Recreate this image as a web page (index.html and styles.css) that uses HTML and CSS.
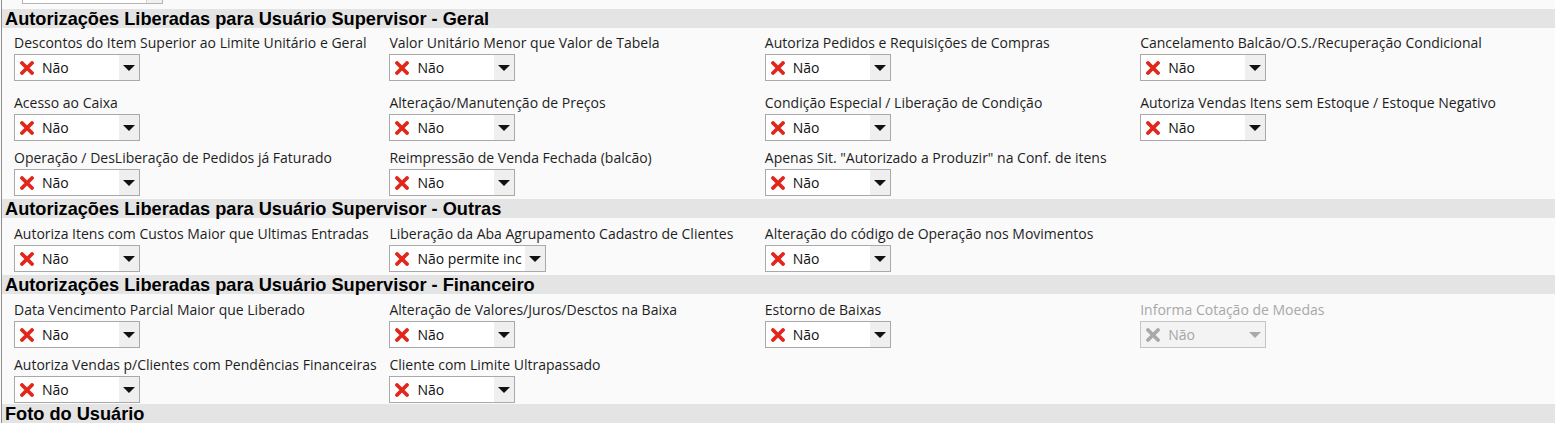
FILE: index.html
```html
<!DOCTYPE html>
<html lang="pt-BR">
<head>
<meta charset="utf-8">
<title>Autorizações</title>
<link rel="stylesheet" href="styles.css">
</head>
<body>
<div class="frame">
  <div class="combo-stub"><span class="stub-btn"></span></div>

  <div class="section-title t1">Autorizações Liberadas para Usuário Supervisor - Geral</div>
  <div class="grid r1">
    <div class="field"><div class="lbl">Descontos do Item Superior ao Limite Unitário e Geral</div><div class="combo"><span class="val"><svg class="x" viewBox="0 0 14 14"><path d="M2 2 L12 12 M12 2 L2 12"/></svg>Não</span><span class="arrow"></span></div></div>
    <div class="field"><div class="lbl">Valor Unitário Menor que Valor de Tabela</div><div class="combo"><span class="val"><svg class="x" viewBox="0 0 14 14"><path d="M2 2 L12 12 M12 2 L2 12"/></svg>Não</span><span class="arrow"></span></div></div>
    <div class="field"><div class="lbl">Autoriza Pedidos e Requisições de Compras</div><div class="combo"><span class="val"><svg class="x" viewBox="0 0 14 14"><path d="M2 2 L12 12 M12 2 L2 12"/></svg>Não</span><span class="arrow"></span></div></div>
    <div class="field"><div class="lbl">Cancelamento Balcão/O.S./Recuperação Condicional</div><div class="combo"><span class="val"><svg class="x" viewBox="0 0 14 14"><path d="M2 2 L12 12 M12 2 L2 12"/></svg>Não</span><span class="arrow"></span></div></div>
  </div>
  <div class="grid r2">
    <div class="field"><div class="lbl">Acesso ao Caixa</div><div class="combo"><span class="val"><svg class="x" viewBox="0 0 14 14"><path d="M2 2 L12 12 M12 2 L2 12"/></svg>Não</span><span class="arrow"></span></div></div>
    <div class="field"><div class="lbl">Alteração/Manutenção de Preços</div><div class="combo"><span class="val"><svg class="x" viewBox="0 0 14 14"><path d="M2 2 L12 12 M12 2 L2 12"/></svg>Não</span><span class="arrow"></span></div></div>
    <div class="field"><div class="lbl">Condição Especial / Liberação de Condição</div><div class="combo"><span class="val"><svg class="x" viewBox="0 0 14 14"><path d="M2 2 L12 12 M12 2 L2 12"/></svg>Não</span><span class="arrow"></span></div></div>
    <div class="field"><div class="lbl">Autoriza Vendas Itens sem Estoque / Estoque Negativo</div><div class="combo"><span class="val"><svg class="x" viewBox="0 0 14 14"><path d="M2 2 L12 12 M12 2 L2 12"/></svg>Não</span><span class="arrow"></span></div></div>
  </div>
  <div class="grid r3">
    <div class="field"><div class="lbl">Operação / DesLiberação de Pedidos já Faturado</div><div class="combo"><span class="val"><svg class="x" viewBox="0 0 14 14"><path d="M2 2 L12 12 M12 2 L2 12"/></svg>Não</span><span class="arrow"></span></div></div>
    <div class="field"><div class="lbl">Reimpressão de Venda Fechada (balcão)</div><div class="combo"><span class="val"><svg class="x" viewBox="0 0 14 14"><path d="M2 2 L12 12 M12 2 L2 12"/></svg>Não</span><span class="arrow"></span></div></div>
    <div class="field"><div class="lbl">Apenas Sit. "Autorizado a Produzir" na Conf. de itens</div><div class="combo"><span class="val"><svg class="x" viewBox="0 0 14 14"><path d="M2 2 L12 12 M12 2 L2 12"/></svg>Não</span><span class="arrow"></span></div></div>
  </div>

  <div class="section-title t2">Autorizações Liberadas para Usuário Supervisor - Outras</div>
  <div class="grid r4">
    <div class="field"><div class="lbl">Autoriza Itens com Custos Maior que Ultimas Entradas</div><div class="combo"><span class="val"><svg class="x" viewBox="0 0 14 14"><path d="M2 2 L12 12 M12 2 L2 12"/></svg>Não</span><span class="arrow"></span></div></div>
    <div class="field"><div class="lbl">Liberação da Aba Agrupamento Cadastro de Clientes</div><div class="combo wide"><span class="val"><svg class="x" viewBox="0 0 14 14"><path d="M2 2 L12 12 M12 2 L2 12"/></svg>Não permite inc</span><span class="arrow"></span></div></div>
    <div class="field"><div class="lbl">Alteração do código de Operação nos Movimentos</div><div class="combo"><span class="val"><svg class="x" viewBox="0 0 14 14"><path d="M2 2 L12 12 M12 2 L2 12"/></svg>Não</span><span class="arrow"></span></div></div>
  </div>

  <div class="section-title t3">Autorizações Liberadas para Usuário Supervisor - Financeiro</div>
  <div class="grid r5">
    <div class="field"><div class="lbl">Data Vencimento Parcial Maior que Liberado</div><div class="combo"><span class="val"><svg class="x" viewBox="0 0 14 14"><path d="M2 2 L12 12 M12 2 L2 12"/></svg>Não</span><span class="arrow"></span></div></div>
    <div class="field"><div class="lbl">Alteração de Valores/Juros/Desctos na Baixa</div><div class="combo"><span class="val"><svg class="x" viewBox="0 0 14 14"><path d="M2 2 L12 12 M12 2 L2 12"/></svg>Não</span><span class="arrow"></span></div></div>
    <div class="field"><div class="lbl">Estorno de Baixas</div><div class="combo"><span class="val"><svg class="x" viewBox="0 0 14 14"><path d="M2 2 L12 12 M12 2 L2 12"/></svg>Não</span><span class="arrow"></span></div></div>
    <div class="field disabled"><div class="lbl">Informa Cotação de Moedas</div><div class="combo"><span class="val"><svg class="x" viewBox="0 0 14 14"><path d="M2 2 L12 12 M12 2 L2 12"/></svg>Não</span><span class="arrow"></span></div></div>
  </div>
  <div class="grid r6">
    <div class="field"><div class="lbl">Autoriza Vendas p/Clientes com Pendências Financeiras</div><div class="combo"><span class="val"><svg class="x" viewBox="0 0 14 14"><path d="M2 2 L12 12 M12 2 L2 12"/></svg>Não</span><span class="arrow"></span></div></div>
    <div class="field"><div class="lbl">Cliente com Limite Ultrapassado</div><div class="combo"><span class="val"><svg class="x" viewBox="0 0 14 14"><path d="M2 2 L12 12 M12 2 L2 12"/></svg>Não</span><span class="arrow"></span></div></div>
  </div>

  <div class="section-title t4">Foto do Usuário</div>
</div>
</body>
</html>
```

FILE: styles.css
```css
html, body {
  margin: 0;
  padding: 0;
  background: #fafafa;
  overflow: hidden;
}
.frame {
  height: 423px;
  margin-left: 1px;
  border-left: 1px solid #8e8e8e;
  overflow: hidden;
  font-family: "Open Sans", "Noto Sans", sans-serif;
  color: #1e1e1e;
}
.combo-stub {
  position: relative;
  width: 139px;
  height: 3px;
  margin-left: 20px;
  border: 1px solid #b4b4b4;
  border-top: none;
  background: #fff;
}
.stub-btn {
  position: absolute;
  right: 0;
  top: 0;
  width: 15px;
  height: 3px;
  border-left: 1px solid #d4d4d4;
  background: #f0f0f0;
}
.section-title {
  height: 19px;
  line-height: 20px;
  padding-left: 3px;
  background: #e4e4e4;
  font-family: "Liberation Sans", Arial, sans-serif;
  font-weight: bold;
  font-size: 18.2px;
  color: #000;
  white-space: nowrap;
}
.t1 { margin-top: 5px; }
.t2 { margin-top: 3px; }
.t3 { margin-top: 3px; }
.t4 { margin-top: 1px; height: 30px; }

.grid {
  display: grid;
  grid-template-columns: repeat(4, 375.4px);
  padding-left: 12px;
}
.r1 { margin-top: 7px; }
.r2 { margin-top: 14px; }
.r3 { margin-top: 9px; }
.r4 { margin-top: 8px; }
.r5 { margin-top: 8px; }
.r6 { margin-top: 9px; }

.lbl {
  font-size: 14px;
  line-height: 16px;
  height: 16px;
  white-space: nowrap;
  margin-bottom: 3px;
  color: #1e1e1e;
}
.combo {
  display: flex;
  width: 124px;
  height: 25px;
  border: 1px solid #a9a9a9;
  background: #fff;
}
.combo.wide {
  width: 155px;
}
.val {
  flex: 1;
  display: flex;
  align-items: center;
  padding-left: 5px;
  font-size: 14px;
  color: #111;
  overflow: hidden;
  white-space: nowrap;
}
.x {
  width: 14px;
  height: 14px;
  margin-right: 8px;
  flex: none;
}
.x path {
  stroke: #e2261a;
  stroke-width: 3.8;
  stroke-linecap: round;
  fill: none;
}
.arrow {
  width: 20px;
  background: #efefef;
  position: relative;
}
.arrow::after {
  content: "";
  position: absolute;
  left: 4px;
  top: 10px;
  border-left: 6px solid transparent;
  border-right: 6px solid transparent;
  border-top: 6px solid #111;
}
.disabled .lbl { color: #a8a8a8; }
.disabled .combo {
  border-color: #c4c4c4;
  background: #f3f3f3;
}
.disabled .val { color: #a6a6a6; }
.disabled .x path { stroke: #a9a9a9; }
.disabled .arrow { background: transparent; }
.disabled .arrow::after { border-top-color: #a9a9a9; }
```
